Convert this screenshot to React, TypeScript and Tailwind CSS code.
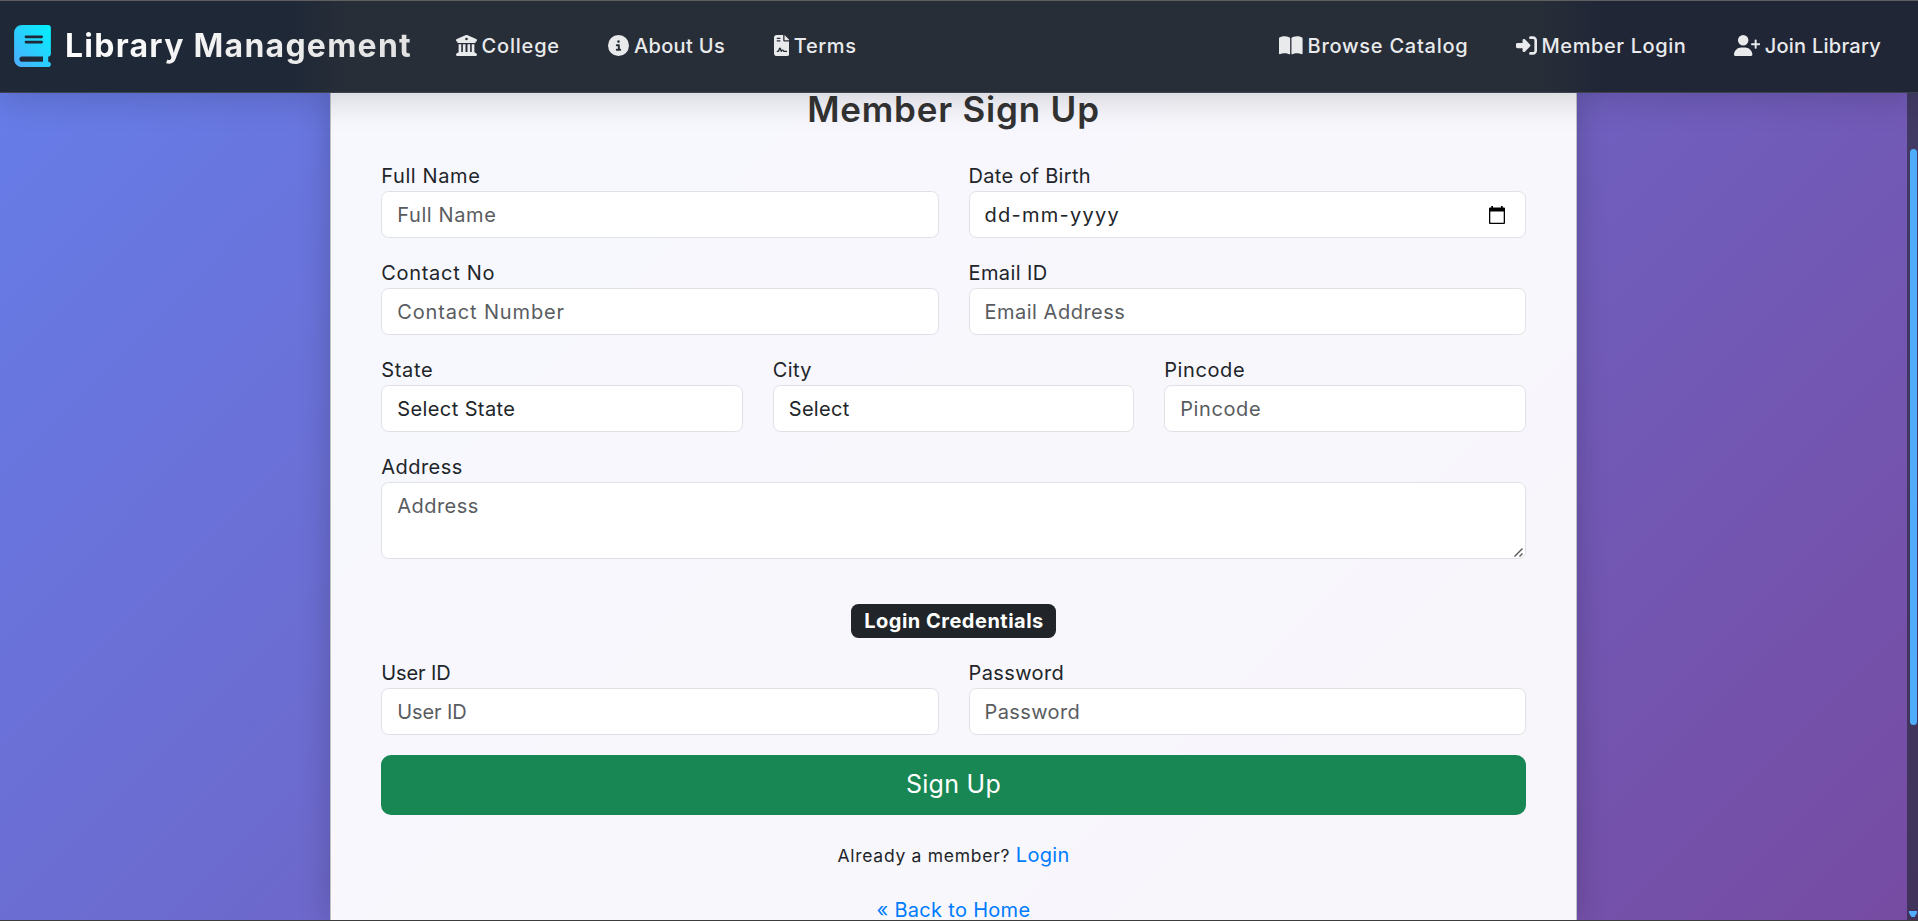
import type { ReactNode } from "react";
import { FaBookOpen, FaBuildingColumns, FaCircleInfo, FaFileContract, FaRightToBracket, FaUserPlus } from "react-icons/fa6";

function NavLink({ icon, tracking, children }: { icon: ReactNode; tracking: string; children: string }) {
  return (
    <a href="#" className="flex items-center gap-[4.5px] text-[20px] leading-[30px] font-medium whitespace-nowrap text-[#e8eaec]">
      {icon}
      <span className={tracking}>{children}</span>
    </a>
  );
}

function BookLogo() {
  return (
    <svg viewBox="0 0 448 512" className="h-[42px] w-[37px] shrink-0" aria-hidden="true">
      <defs>
        <linearGradient id="book" x1="0" y1="1" x2="1" y2="0">
          <stop offset="0" stopColor="#4facfe" />
          <stop offset="1" stopColor="#00f2fe" />
        </linearGradient>
      </defs>
      <path
        fill="url(#book)"
        d="M96 0C43 0 0 43 0 96V416c0 53 43 96 96 96H384h32c17.7 0 32-14.3 32-32s-14.3-32-32-32V384c17.7 0 32-14.3 32-32V32c0-17.7-14.3-32-32-32H384 96zm0 384H352v64H96c-17.7 0-32-14.3-32-32s14.3-32 32-32zm32-240c0-8.8 7.2-16 16-16H336c8.8 0 16 7.2 16 16s-7.2 16-16 16H144c-8.8 0-16-7.2-16-16zm16 48H336c8.8 0 16 7.2 16 16s-7.2 16-16 16H144c-8.8 0-16-7.2-16-16s7.2-16 16-16z"
      />
    </svg>
  );
}

function Field({ label, tracking, children }: { label: string; tracking: string; children: ReactNode }) {
  return (
    <label className="flex min-w-0 flex-1 flex-col">
      <span className={"h-[30px] leading-[30px] " + tracking}>{label}</span>
      {children}
    </label>
  );
}

const base = "block w-full rounded-[7.5px] border border-[#dee2e6] bg-white px-[15px] outline-none placeholder:text-[#595c5f] placeholder:opacity-100 ";
const control = base + "h-[47px] ";

export default function App() {
  return (
    <div className="flex h-[921px] w-[1918px] flex-col overflow-hidden border-b border-[#3c3c3c] bg-[linear-gradient(135deg,#667eea_0%,#764ba2_100%)] font-['Inter',sans-serif] text-[20px] text-[#212529]">
      <header className="z-10 flex h-[93px] shrink-0 items-center border-t border-b border-t-[#5f5f5f] border-b-[#3c434e] bg-[linear-gradient(90deg,#1f2837_0px,#1f2837_290px,#282e38_350px,#282e38_1540px,#202636_1600px,#202636_1918px)] pr-[37px] pb-[2px] pl-[14px] shadow-[0_8px_32px_rgba(0,0,0,0.15)]">
        <a href="#" className="flex items-center gap-[14px]">
          <BookLogo />
          <span className="bg-[linear-gradient(135deg,#fff,#e0e0e0)] bg-clip-text text-[32px] leading-[48px] font-bold tracking-[1.25px] text-transparent">Library Management</span>
        </a>
        <nav className="ml-[44px] flex gap-[48.5px]">
          <NavLink icon={<FaBuildingColumns className="h-[21px] w-[21px] shrink-0" />} tracking="tracking-[0.8px]">College</NavLink>
          <NavLink icon={<FaCircleInfo className="h-[21px] w-[21px] shrink-0" />} tracking="tracking-[0.35px]">About Us</NavLink>
          <NavLink icon={<FaFileContract className="h-[21px] w-[15.75px] shrink-0" />} tracking="tracking-[0.6px]">Terms</NavLink>
        </nav>
        <nav className="ml-auto flex gap-[47.5px]">
          <NavLink icon={<FaBookOpen className="h-[21px] w-[23.6px] shrink-0" />} tracking="tracking-[0.75px]">Browse Catalog</NavLink>
          <NavLink icon={<FaRightToBracket className="h-[21px] w-[21px] shrink-0" />} tracking="tracking-[0.6px]">Member Login</NavLink>
          <NavLink icon={<FaUserPlus className="h-[21px] w-[26.25px] shrink-0" />} tracking="tracking-[0.25px]">Join Library</NavLink>
        </nav>
      </header>

      <div className="flex min-h-0 flex-1">
        <main className="flex min-w-0 flex-1 justify-center overflow-hidden">
          <form className="flex w-[1247px] flex-col border-x border-[#c0c0c8] bg-white/95 px-[50.25px] shadow-[0_0_30px_rgba(0,0,0,0.2)]">
            <h1 className="mb-[31px] h-[37px] shrink-0 text-center text-[35px] leading-[32px] font-semibold tracking-[0.8px] text-[#333]">Member Sign Up</h1>

            <div className="mb-[20px] flex gap-[30px]">
              <Field label="Full Name" tracking="tracking-[0.6px]">
                <input className={control + "tracking-[0.6px]"} placeholder="Full Name" />
              </Field>
              <Field label="Date of Birth" tracking="tracking-[0.3px]">
                <span className={control + "flex! items-center justify-between pr-[19.5px]! tracking-[1.25px]"}>
                  dd-mm-yyyy
                  <svg viewBox="0 0 16 18" className="h-[18px] w-[16px]" aria-hidden="true">
                    <path fill="#000" d="M2.300 0h1.700v1.500h8V0h1.700v1.500H15a1 1 0 0 1 1 1V17a1 1 0 0 1-1 1H1a1 1 0 0 1-1-1V2.500a1 1 0 0 1 1-1h1.300zM1.300 5.500v11.200h13.400V5.500z" />
                  </svg>
                </span>
              </Field>
            </div>

            <div className="mb-[20px] flex gap-[30px]">
              <Field label="Contact No" tracking="tracking-[0.7px]">
                <input className={control + "tracking-[0.85px]"} placeholder="Contact Number" />
              </Field>
              <Field label="Email ID" tracking="tracking-[0.4px]">
                <input className={control + "tracking-[0.5px]"} placeholder="Email Address" />
              </Field>
            </div>

            <div className="mb-[20px] flex gap-[30px]">
              <Field label="State" tracking="tracking-[0.7px]">
                <select className={control + "appearance-none tracking-[0.4px]"}>
                  <option>Select State</option>
                </select>
              </Field>
              <Field label="City" tracking="tracking-[0.4px]">
                <select className={control + "appearance-none tracking-[0.3px]"}>
                  <option>Select</option>
                </select>
              </Field>
              <Field label="Pincode" tracking="tracking-[0.6px]">
                <input className={control + "tracking-[0.6px]"} placeholder="Pincode" />
              </Field>
            </div>

            <div className="flex">
              <Field label="Address" tracking="tracking-[0.45px]">
                <span className="relative block">
                  <textarea className={base + "h-[77px] resize-none py-[8px] leading-[30px] tracking-[0.45px]"} placeholder="Address" />
                  <svg viewBox="0 0 9 9" className="absolute right-[2.500px] bottom-[2px] h-[9px] w-[9px]" aria-hidden="true">
                    <path d="M.5 8.500l8-8M5.500 8.500l3-3" stroke="#555" strokeWidth="1.400" fill="none" />
                  </svg>
                </span>
              </Field>
            </div>

            <div className="mt-[45px] mb-[20px] flex justify-center">
              <span className="flex h-[34px] w-[205px] items-center justify-center rounded-[7.5px] bg-[#212529] pb-px pl-px font-bold tracking-[0.5px] whitespace-nowrap text-white">Login Credentials</span>
            </div>

            <div className="mb-[20px] flex gap-[30px]">
              <Field label="User ID" tracking="tracking-[-0.1px]">
                <input className={control + "tracking-[-0.1px]"} placeholder="User ID" />
              </Field>
              <Field label="Password" tracking="tracking-[0.4px]">
                <input className={control + "tracking-[0.4px]"} placeholder="Password" />
              </Field>
            </div>

            <button type="button" className="h-[60px] shrink-0 rounded-[10px] bg-[#198754] text-[25px] tracking-[0.3px] text-white">Sign Up</button>

            <p className="mt-[25px] text-center leading-[30px]">
              <span className="text-[17.5px] tracking-[0.72px]">Already a member?</span>{" "}
              <a href="#" className="tracking-[0.3px] text-[#007bff]">Login</a>
            </p>
            <p className="mt-[25px] text-center leading-[28px] whitespace-nowrap">
              <a href="#" className="tracking-[0.3px] text-[#007bff]">« Back to Home</a>
            </p>
          </form>
        </main>

        <div className="flex w-[11px] shrink-0 flex-col items-end bg-[linear-gradient(180deg,#413a64,#40325b)] pt-[56px] pr-px">
          <div className="h-[576px] w-[7px] rounded-full bg-[#4facfe]" />
          <svg viewBox="0 0 8 6" className="mt-auto mb-[3px] h-[6px] w-[8px]" aria-hidden="true">
            <path fill="#4facfe" d="M0 0h8v2L5.500 6h-3L0 2z" />
          </svg>
        </div>
      </div>
    </div>
  );
}
